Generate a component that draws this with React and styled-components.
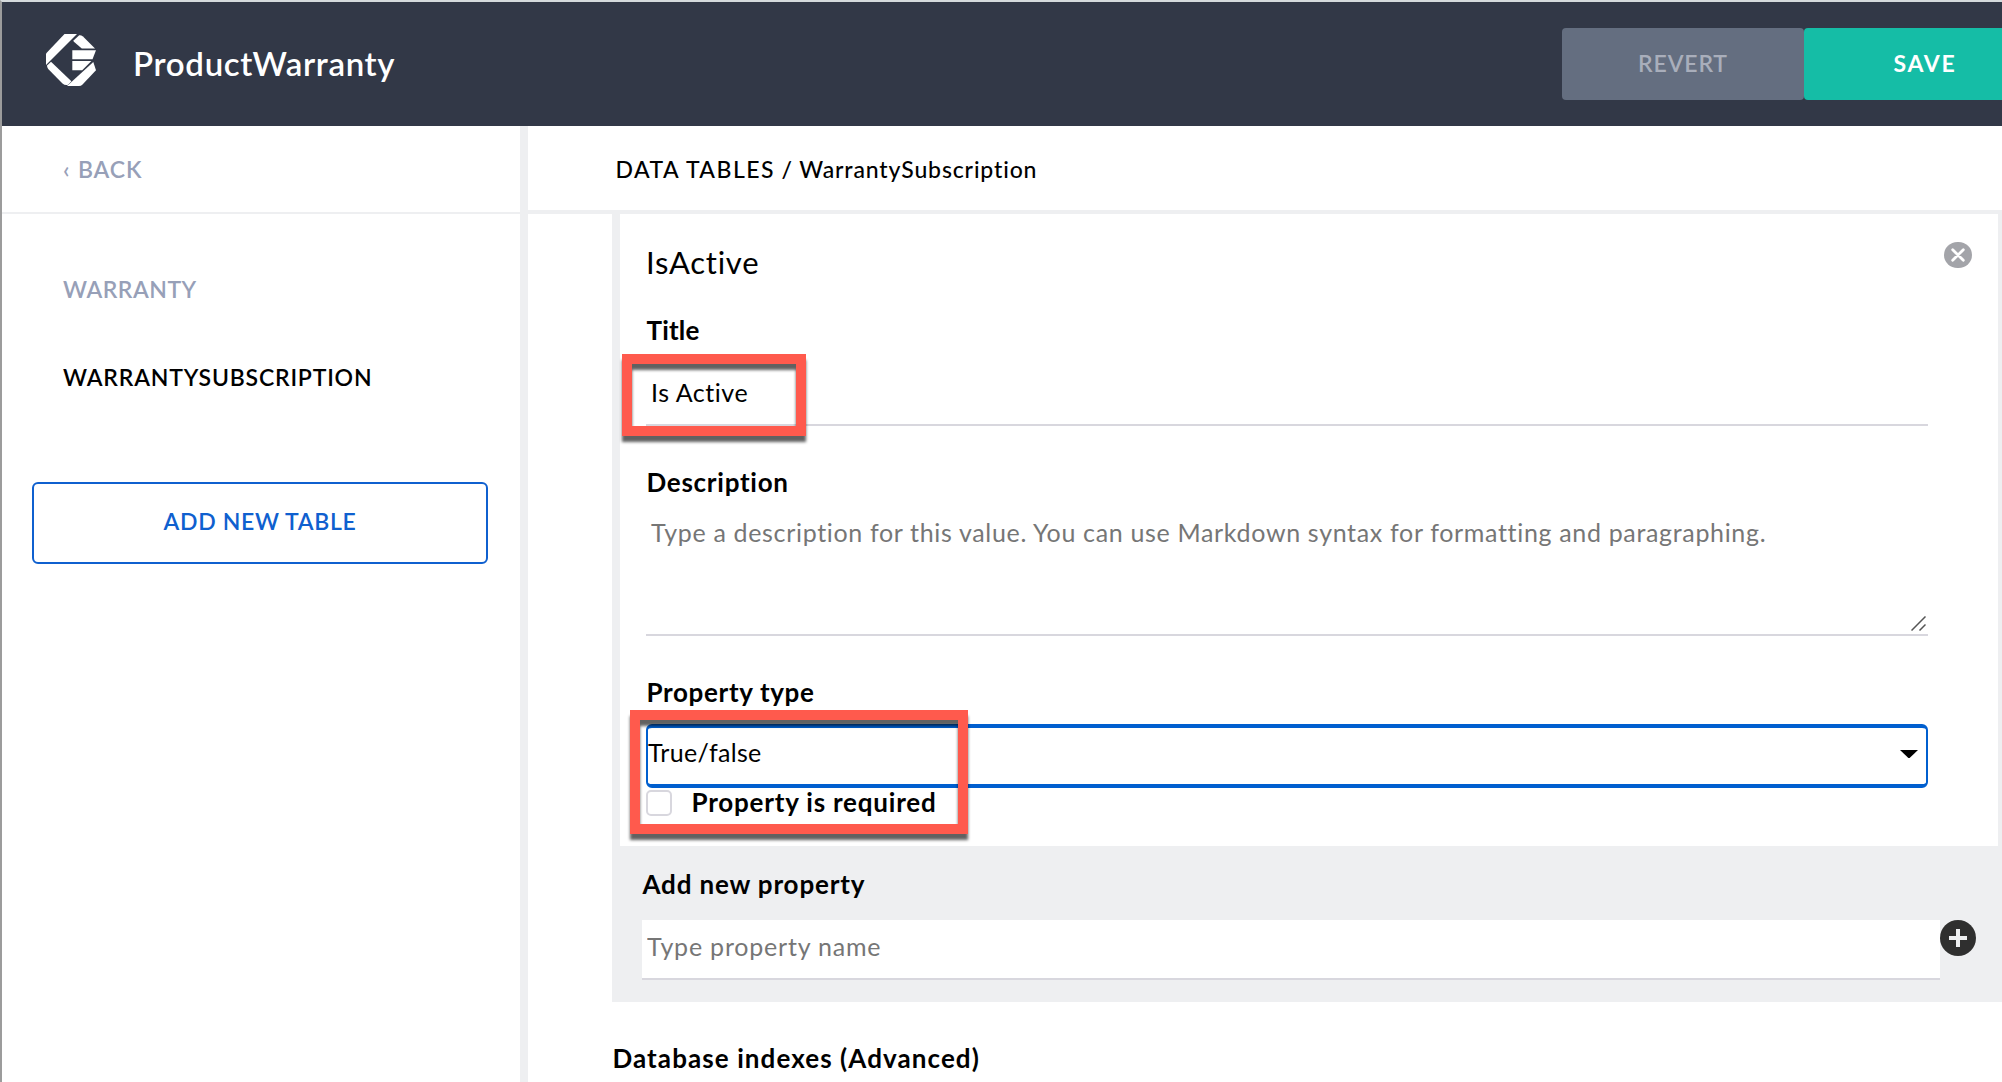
import React from 'react';
import styled, { createGlobalStyle } from 'styled-components';

const GlobalStyle = createGlobalStyle`
  * { box-sizing: border-box; }
  body { margin: 0; background: #fff; overflow: hidden; }
  body, button, input, textarea { font-family: Lato, "Open Sans", sans-serif; }
`;

const Window = styled.div`
  position: relative;
  width: 2002px;
  height: 1082px;
  overflow: hidden;
  display: flex;
  flex-direction: column;
  border-top: 2px solid #d5dadc;
  border-left: 2px solid #9c9c9c;
  background: #fff;
  color: #000;
`;

const EdgeMark = styled.span`
  position: absolute;
  left: -2px;
  top: 284px;
  width: 2px;
  height: 14px;
  background: #c4c4c4;
  border: solid #333;
  border-width: 1px 0;
`;

const Header = styled.header`
  flex: none;
  height: 124px;
  background: #323847;
  display: flex;
  align-items: center;
  padding-left: 44px;
`;

const Logo = styled.svg`
  display: block;
  flex: none;
  width: 50px;
  height: 52px;
  margin-bottom: 8px;
`;

const AppTitle = styled.h1`
  flex: 1;
  margin: 0 0 0 37px;
  padding-bottom: 2px;
  font-size: 33px;
  font-weight: 600;
  letter-spacing: 0.68px;
  color: #fff;
`;

const HeaderButton = styled.button`
  flex: none;
  width: 242px;
  height: 72px;
  padding: 0 0 2px;
  border: 0;
  border-radius: 4px;
  font-size: 23px;
  font-weight: ${(p) => (p.$primary ? 700 : 600)};
  letter-spacing: ${(p) => (p.$primary ? '1.7px' : '0.86px')};
  background: ${(p) => (p.$primary ? '#15bda6' : '#646e80')};
  color: ${(p) => (p.$primary ? '#fff' : '#a9aebb')};
`;

const HeaderActions = styled.div`
  flex: none;
  display: flex;
  width: 440px;
`;

const Body = styled.div`
  flex: 1;
  min-height: 0;
  display: flex;
`;

const Sidebar = styled.aside`
  flex: none;
  width: 526px;
  border-right: 8px solid #eeeff1;
`;

const BackLink = styled.a`
  display: flex;
  align-items: center;
  height: 88px;
  padding-left: 61px;
  border-bottom: 2px solid #eeeff1;
  font-size: 23px;
  font-weight: 600;
  letter-spacing: 0.85px;
  white-space: pre;
  color: #97a0b8;
`;

const Chevron = styled.span`
  width: 15px;
`;

const TableNav = styled.nav`
  padding-top: 31px;
`;

const TableLink = styled.a`
  display: flex;
  align-items: center;
  height: 88px;
  padding-left: 61px;
  font-size: 23px;
  font-weight: 600;
  letter-spacing: ${(p) => (p.$muted ? '0.5px' : '0.8px')};
  color: ${(p) => (p.$muted ? '#97a0b8' : '#000')};
`;

const AddTableButton = styled.button`
  display: block;
  width: 456px;
  height: 82px;
  margin: 61px 0 0 30px;
  padding: 0 0 4px;
  border: 2px solid #0f60cf;
  border-radius: 6px;
  background: #fff;
  color: #0f60cf;
  font-size: 23px;
  font-weight: 600;
  letter-spacing: 0.66px;
`;

const Main = styled.main`
  flex: 1;
  min-width: 0;
`;

const Breadcrumb = styled.div`
  height: 88px;
  padding: 2px 0 0 87.5px;
  border-bottom: 4px solid #eeeff1;
  font-size: 23px;
  line-height: 82px;
  font-weight: 500;
  letter-spacing: 0.86px;
`;

const Section = styled.span`
  letter-spacing: 1.45px;
`;

const Content = styled.div`
  padding-left: 84px;
`;

const PropertyList = styled.section`
  background: #eeeff1;
  padding: 0 4px 22px 8px;
`;

const Card = styled.div`
  position: relative;
  height: 632px;
  padding: 24px 70px 30px 26px;
  background: #fff;
`;

const PropertyName = styled.h2`
  margin: 0 0 26px;
  font-size: 31px;
  line-height: 48px;
  font-weight: 400;
  letter-spacing: 0.75px;
`;

const RemoveButton = styled.svg`
  position: absolute;
  right: 26px;
  top: 28px;
  width: 28px;
  height: 26px;
`;

const Label = styled.label`
  display: block;
  margin-top: ${(p) => p.$gap || 0}px;
  padding-left: 0.5px;
  font-size: 26px;
  line-height: 36px;
  font-weight: 700;
  letter-spacing: ${(p) => p.$track}px;
`;

const TextInput = styled.input`
  display: block;
  width: 100%;
  height: 78px;
  padding: 12px 5px 0;
  border: 0;
  border-bottom: 2px solid #d8d7de;
  outline: 0;
  background: transparent;
  font-size: 25px;
  letter-spacing: 0.55px;
  color: #000;
`;

const TextAreaWrap = styled.div`
  position: relative;
  height: 136px;
`;

const TextArea = styled.textarea`
  display: block;
  width: 100%;
  height: 136px;
  padding: 14px 5px 0;
  border: 0;
  border-bottom: 2px solid #d8d7de;
  outline: 0;
  resize: none;
  overflow: hidden;
  background: transparent;
  font-size: 25px;
  line-height: 36px;
  letter-spacing: 0.665px;
  &::placeholder { color: #767676; opacity: 1; }
`;

const ResizeGrip = styled.svg`
  position: absolute;
  right: 2px;
  bottom: 5px;
  width: 15px;
  height: 15px;
`;

const SelectBox = styled.div`
  display: flex;
  align-items: center;
  justify-content: space-between;
  height: 64px;
  margin-top: 14px;
  padding: 0 8.5px 8px 0;
  border: solid #005fcf;
  border-width: 4px 2px;
  border-radius: 6px;
  background: #fff;
  font-size: 25px;
  letter-spacing: 0.32px;
`;

const Caret = styled.svg`
  display: block;
  width: 18px;
  height: 8px;
  margin-top: 4px;
`;

const CheckRow = styled.div`
  display: flex;
  align-items: center;
  gap: 19px;
  height: 26px;
  margin-top: 2px;
  label { padding-bottom: 3px; }
`;

const Checkbox = styled.span`
  width: 26px;
  height: 26px;
  border: 2px solid #d8d7de;
  border-radius: 5px;
  background: #fff;
`;

const AddProperty = styled.div`
  padding: 20px 22px 0;
`;

const AddRow = styled.div`
  display: flex;
  align-items: flex-start;
  margin-top: 18px;
`;

const NameInput = styled.input`
  flex: none;
  width: 1298px;
  height: 60px;
  padding: 0 5px 6px;
  border: 0;
  border-bottom: 2px solid #d8d7de;
  outline: 0;
  background: #fff;
  font-size: 25px;
  letter-spacing: 0.8px;
  &::placeholder { color: #767676; opacity: 1; }
`;

const AddIcon = styled.svg`
  flex: none;
  display: block;
  width: 36px;
  height: 36px;
`;

const Highlight = styled.div`
  position: absolute;
  left: ${(p) => p.$x}px;
  top: ${(p) => p.$y}px;
  width: ${(p) => p.$w}px;
  height: ${(p) => p.$h}px;
  border: 10px solid #ff5a4d;
  filter: drop-shadow(0 6px 1.5px rgba(0, 0, 0, 0.62));
  pointer-events: none;
`;

export default function App() {
  return (
    <>
      <GlobalStyle />
      <Window>
        <EdgeMark />
        <Header>
          <Logo viewBox="0 0 50 52" fill="#fff">
            <path d="M18.5 0H31L0 31V19.5Z" />
            <path d="M27.8 6.2L33.2 1.2Q35 .8 37 2.6L49 14.6H35.8L27.6 7.6Z" />
            <path d="M26.3 16.3H50L46.5 25.3H26.3Z" />
            <path d="M26.3 27H45.4L36.2 36.2H26.3Z" />
            <path d="M5 27.8L25.4 47.3L22.4 50.6Q19.5 52 16.5 49.6L2.2 35Q1 33.6 1 31.6Z" />
            <path d="M47.3 28L50 36.2L36.5 50.5Q35 52 33 52H21Z" />
          </Logo>
          <AppTitle>ProductWarranty</AppTitle>
          <HeaderActions>
            <HeaderButton>REVERT</HeaderButton>
            <HeaderButton $primary>SAVE</HeaderButton>
          </HeaderActions>
        </Header>
        <Body>
          <Sidebar>
            <BackLink><Chevron>‹</Chevron>BACK</BackLink>
            <TableNav>
              <TableLink $muted>WARRANTY</TableLink>
              <TableLink>WARRANTYSUBSCRIPTION</TableLink>
            </TableNav>
            <AddTableButton>ADD NEW TABLE</AddTableButton>
          </Sidebar>
          <Main>
            <Breadcrumb><Section>DATA TABLES</Section> / WarrantySubscription</Breadcrumb>
            <Content>
              <PropertyList>
                <Card>
                  <PropertyName>IsActive</PropertyName>
                  <RemoveButton viewBox="0 0 28 26">
                    <rect width="28" height="26" rx="13.5" ry="13" fill="#a3a4a9" />
                    <path d="M8.7 7.8L19.3 18.2M19.3 7.8L8.7 18.2" stroke="#fff" strokeWidth="2.8" strokeLinecap="round" />
                  </RemoveButton>
                  <Label $track={0.2}>Title</Label>
                  <TextInput defaultValue="Is Active" />
                  <Label $gap={38} $track={0.73}>Description</Label>
                  <TextAreaWrap>
                    <TextArea placeholder="Type a description for this value. You can use Markdown syntax for formatting and paragraphing." />
                    <ResizeGrip viewBox="0 0 15 15" stroke="#555" strokeWidth="1.5">
                      <path d="M.5 14.5L14.5 .5M8.5 14.5L14.5 8.5" />
                    </ResizeGrip>
                  </TextAreaWrap>
                  <Label $gap={38} $track={0.65}>Property type</Label>
                  <SelectBox>
                    True/false
                    <Caret viewBox="0 0 18 8"><path d="M0 0H18L9.6 8H8.4Z" /></Caret>
                  </SelectBox>
                  <CheckRow>
                    <Checkbox />
                    <Label $track={0.8}>Property is required</Label>
                  </CheckRow>
                </Card>
                <AddProperty>
                  <Label $track={0.84}>Add new property</Label>
                  <AddRow>
                    <NameInput placeholder="Type property name" />
                    <AddIcon viewBox="0 0 36 36">
                      <circle cx="18" cy="18" r="18" fill="#2f2f2f" />
                      <path d="M18 9V27M9 18H27" stroke="#eeeff1" strokeWidth="4" />
                    </AddIcon>
                  </AddRow>
                </AddProperty>
              </PropertyList>
              <Label $gap={38} $track={1.08}>Database indexes (Advanced)</Label>
            </Content>
          </Main>
        </Body>
        <Highlight $x={620} $y={352} $w={184} $h={82} />
        <Highlight $x={628} $y={708} $w={338} $h={124} />
      </Window>
    </>
  );
}
